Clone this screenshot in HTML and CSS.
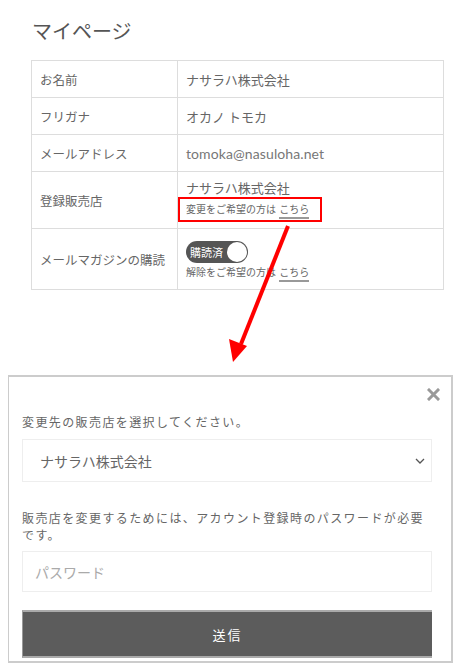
FILE: index.html
```html
<!DOCTYPE html>
<html lang="ja">
<head>
    <meta charset="UTF-8">
    <meta name="viewport" content="width=device-width, initial-scale=1.0">
    <title>マイページ</title>
    <link rel="stylesheet" href="styles.css">
</head>
<body>

<div class="page">
    <h1 class="title">マイページ</h1>

    <table class="profile">
        <tr class="row-sm">
            <th>お名前</th>
            <td>ナサラハ株式会社</td>
        </tr>
        <tr class="row-sm">
            <th>フリガナ</th>
            <td>オカノ トモカ</td>
        </tr>
        <tr class="row-sm">
            <th>メールアドレス</th>
            <td class="latin">tomoka@nasuloha.net</td>
        </tr>
        <tr class="row-shop">
            <th>登録販売店</th>
            <td>
                <div class="shop-name">ナサラハ株式会社</div>
                <span class="note highlight">変更をご希望の方は <a href="#" class="link">こちら</a></span>
            </td>
        </tr>
        <tr class="row-mag">
            <th>メールマガジンの購読</th>
            <td>
                <div class="toggle"><span class="toggle-text">購読済</span><span class="knob"></span></div>
                <div class="note">解除をご希望の方は <a href="#" class="link">こちら</a></div>
            </td>
        </tr>
    </table>

    <div class="modal">
        <button class="close" aria-label="閉じる">
            <svg width="13" height="13" viewBox="0 0 13 13"><path d="M2 2 L11 11 M11 2 L2 11" stroke="#999" stroke-width="3" stroke-linecap="square"/></svg>
        </button>
        <p class="modal-text first">変更先の販売店を選択してください。</p>
        <div class="select">
            <span>ナサラハ株式会社</span>
            <svg width="10" height="6" viewBox="0 0 10 6"><path d="M1 1 L5 5 L9 1" fill="none" stroke="#555" stroke-width="1.3"/></svg>
        </div>
        <p class="modal-text second">販売店を変更するためには、アカウント登録時のパスワードが必要です。</p>
        <input type="password" class="password" placeholder="パスワード">
        <button class="submit">送信</button>
    </div>

    <svg class="arrow" width="461" height="668" viewBox="0 0 461 668">
        <line x1="288" y1="226" x2="241" y2="344" stroke="#ff0000" stroke-width="4"/>
        <polygon points="233,362 229,339 247,346" fill="#ff0000"/>
    </svg>
</div>

</body>
</html>
```

FILE: styles.css
```css
body {
    margin: 0;
    background-color: white;
    font-family: "Noto Sans CJK JP", "Noto Sans", sans-serif;
    color: #666;
}

.page {
    position: relative;
    width: 461px;
    height: 668px;
    overflow: hidden;
}

.title {
    margin: 0;
    padding: 17px 0 0 32px;
    font-size: 20px;
    font-weight: normal;
    line-height: 28px;
    color: #555;
}

.profile {
    margin: 15px 0 0 31px;
    width: 413px;
    border-collapse: collapse;
    font-size: 13px;
}

.profile th,
.profile td {
    border: 1px solid #ddd;
    padding: 0 8px;
    text-align: left;
    font-weight: normal;
    vertical-align: middle;
}

.profile th {
    width: 129px;
    white-space: nowrap;
    font-size: 12.5px;
}

.row-sm {
    height: 37px;
}

.row-shop {
    height: 57px;
}

.row-mag {
    height: 61px;
}

.latin {
    font-family: "Lato", "Open Sans", sans-serif;
    font-size: 14px;
    letter-spacing: 0.1px;
    color: #777;
}

.shop-name {
    line-height: 18px;
    margin-top: 1px;
}

.note {
    font-size: 10px;
    line-height: 18px;
}

.highlight {
    display: inline-block;
    margin-left: -8px;
    padding: 1px 11px 2px 6px;
    border: 2px solid #ff0000;
}

.link {
    color: #666;
    text-decoration: none;
    border-bottom: 2px solid #999;
    padding-bottom: 1px;
    margin-left: 1px;
}

.toggle {
    display: inline-flex;
    align-items: center;
    justify-content: space-between;
    width: 62px;
    height: 22px;
    margin-top: 4px;
    padding: 0 1px 0 4px;
    box-sizing: border-box;
    background-color: #555;
    border-radius: 11px;
}

.toggle-text {
    color: white;
    font-size: 11px;
}

.knob {
    width: 20px;
    height: 20px;
    border-radius: 50%;
    background-color: white;
}

.modal {
    margin: 85px 0 0 8px;
    width: 445px;
    height: 288px;
    box-sizing: border-box;
    border: 2px solid #ccc;
    border-left-width: 1px;
    padding: 0 19px 0 13px;
    position: relative;
}

.close {
    position: absolute;
    top: 11px;
    right: 11px;
    border: none;
    background: none;
    padding: 0;
    cursor: pointer;
}

.modal-text {
    margin: 0;
    font-size: 12px;
    line-height: 17px;
    letter-spacing: 1.4px;
}

.modal-text.first {
    padding-top: 36px;
}

.modal-text.second {
    margin-top: 27px;
}

.select {
    display: flex;
    align-items: center;
    justify-content: space-between;
    margin-top: 9px;
    height: 43px;
    box-sizing: border-box;
    border: 1px solid #eee;
    padding: 0 6px 0 17px;
    font-size: 14px;
}

.password {
    display: block;
    margin-top: 8px;
    width: 100%;
    height: 41px;
    box-sizing: border-box;
    border: 1px solid #eee;
    padding: 0 12px;
    font-family: "Noto Sans CJK JP", sans-serif;
    font-size: 14px;
}

.password::placeholder {
    color: #aaa;
}

.submit {
    display: block;
    margin-top: 18px;
    width: 100%;
    height: 48px;
    border: none;
    border-top: 2px solid #aaa;
    border-bottom: 2px solid #aaa;
    border-left: 1px solid #999;
    background-color: #5c5c5c;
    color: white;
    font-family: "Noto Sans CJK JP", sans-serif;
    font-size: 13px;
    letter-spacing: 2px;
    cursor: pointer;
}

.arrow {
    position: absolute;
    top: 0;
    left: 0;
    pointer-events: none;
}
```
